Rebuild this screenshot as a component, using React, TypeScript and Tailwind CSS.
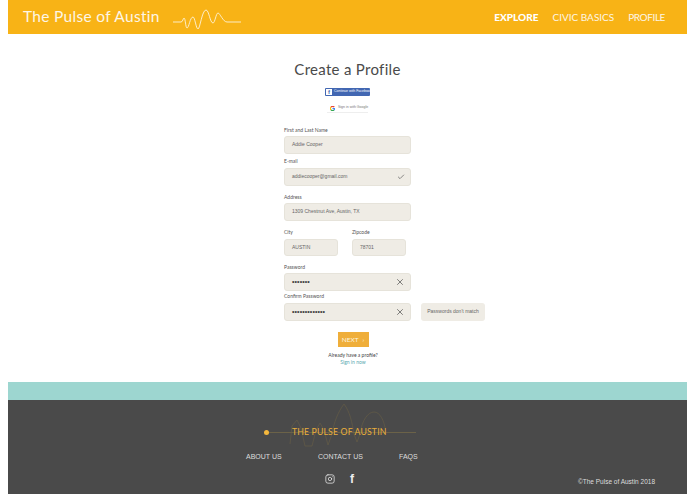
import { Check, Instagram, X } from "lucide-react";

const futura = "font-['Lato',sans-serif]";
const arial = "font-['Liberation_Sans',Arial,sans-serif]";

function Field({
  label,
  value,
  labelClass,
  width = "w-[127px]",
  height = "h-[18px]",
  icon,
  dots,
}: {
  label: string;
  value: string;
  labelClass: string;
  width?: string;
  height?: string;
  icon?: React.ReactNode;
  dots?: boolean;
}) {
  return (
    <div className={width}>
      <div className={`${futura} text-[5px] leading-[7px] text-[#555] ${labelClass}`}>{label}</div>
      <div
        className={`flex ${height} items-center justify-between rounded-[3px] border border-[#e6e3da] bg-[#efece5] pl-[7px] pr-[5px] ${arial} ${
          dots ? "text-[7px] font-bold tracking-[0.1px] text-[#444]" : "text-[5px] text-[#666]"
        }`}
      >
        <span>{value}</span>
        {icon}
      </div>
    </div>
  );
}

function Pulse() {
  return (
    <svg width="72" height="24" viewBox="0 0 72 24" fill="none" stroke="#fdf3d8" strokeWidth="0.9">
      <path d="M3 17 H11 C13 17 13 13 14 13 C15.5 13 15.5 23 17 23 C19 23 20 12 23 12 C25 12 26 24 28 24 C30 24 32 5 36 5 C39 5 40 18 43 18 C45 18 46 8 48 8 C50 8 53 17 57 17 H71" />
    </svg>
  );
}

function Skyline() {
  return (
    <svg
      className="absolute left-[24px] top-0"
      width="104"
      height="48"
      viewBox="0 0 104 48"
      fill="none"
      stroke="#645c46"
      strokeWidth="0.7"
    >
      <path d="M2 44 L4 26 L9 20 L13 28 L17 46 L24 46 L28 30 L32 23 L36 30 L40 45 L44 34 C46 22 50 12 56 4 C62 12 64 22 66 34 L69 42 L72 34 C74 20 80 12 86 12 C92 12 96 20 98 32" />
    </svg>
  );
}

export default function App() {
  return (
    <div className={`flex min-h-[494px] w-[695px] flex-col overflow-hidden bg-white px-2 ${futura}`}>
      <header className="flex h-[34px] items-center justify-between bg-[#f8b316] pl-[15px] pr-[22px] text-[#fdf6e6]">
        <div className="flex items-center gap-[10px]">
          <span className="text-[15.5px] leading-none tracking-[0.3px]">The Pulse of Austin</span>
          <Pulse />
        </div>
        <nav className="flex items-center gap-[14px] text-[10px]">
          <span className="font-black text-white">EXPLORE</span>
          <span>CIVIC BASICS</span>
          <span className="tracking-[-0.4px]">PROFILE</span>
        </nav>
      </header>

      <main className="flex h-[348px] flex-col items-center">
        <h1 className="mt-[25px] text-[15px] leading-5 tracking-[0.3px] text-[#4a4a4a]">Create a Profile</h1>
        <div className="mt-[9px] flex h-[8px] w-[45px] items-center gap-[2px] rounded-[1px] bg-[#4267b2] px-[1px]">
          <span className={`flex h-[6px] w-[6px] shrink-0 items-center justify-center bg-white text-[6px] font-bold leading-none text-[#4267b2] ${arial}`}>
            f
          </span>
          <span className={`whitespace-nowrap text-[3.5px] leading-none text-white ${arial}`}>Continue with Facebook</span>
        </div>
        <div className="mt-[8px] flex h-[9px] w-[41px] items-center gap-[3px] border-b border-[#eee] pl-[3px]">
          <svg width="5" height="5" viewBox="0 0 10 10" fill="none" strokeWidth="2.4" className="shrink-0">
            <path d="M8.5 2.2 A4.2 4.2 0 0 0 2 2.2" stroke="#ea4335" />
            <path d="M2 2.2 A4.2 4.2 0 0 0 2 7.8" stroke="#fbbc05" />
            <path d="M2 7.8 A4.2 4.2 0 0 0 8 8" stroke="#34a853" />
            <path d="M8 8 A4.2 4.2 0 0 0 9 5 H5" stroke="#4285f4" />
          </svg>
          <span className={`whitespace-nowrap text-[3.5px] leading-none text-[#777] ${arial}`}>Sign in with Google</span>
        </div>

        <form className="ml-[276px] mt-[14px] flex w-[201px] flex-col self-start">
          <Field label="First and Last Name" value="Addie Cooper" labelClass="mb-[2px]" />
          <div className="mt-[4px]">
            <Field
              label="E-mail"
              value="addiecooper@gmail.com"
              labelClass="mb-[3px]"
              icon={<Check className="h-[8px] w-[8px] text-[#555]" strokeWidth={2} />}
            />
          </div>
          <div className="mt-[8px]">
            <Field label="Address" value="1309 Chestnut Ave, Austin, TX" labelClass="mb-[2px]" />
          </div>
          <div className="mt-[8px] flex gap-[14px]">
            <Field label="City" value="AUSTIN" labelClass="mb-[3px]" width="w-[54px]" height="h-[17px]" />
            <Field label="Zipcode" value="78701" labelClass="mb-[3px]" width="w-[54px]" height="h-[17px]" />
          </div>
          <div className="mt-[8px]">
            <Field
              label="Password"
              value="•••••••"
              labelClass="mb-[2px]"
              dots
              icon={<X className="h-[10px] w-[10px] text-[#444]" strokeWidth={1.6} />}
            />
          </div>
          <div className="mt-[2px] flex items-end gap-[10px]">
            <Field
              label="Confirm Password"
              value="•••••••••••••"
              labelClass="mb-[3px]"
              dots
              icon={<X className="h-[10px] w-[10px] text-[#444]" strokeWidth={1.6} />}
            />
            <div className={`flex h-[18px] w-[64px] items-center justify-center rounded-[3px] bg-[#efece5] text-[5px] text-[#666] ${arial}`}>
              Passwords don't match
            </div>
          </div>
          <div className="mt-[11px] flex w-[138px] justify-center">
            <div className="flex h-[15px] w-[31px] items-center justify-center gap-[4px] bg-[#efae3a] text-[6.5px] text-[#fdf3dc]">
              <span>NEXT</span>
              <span className="text-[6px]">›</span>
            </div>
          </div>
          <div className="mt-[5px] w-[138px] text-center text-[5px] leading-[7px]">
            <div className="text-[#444]">Already have a profile?</div>
            <div className="text-[#5aa9b0]">Sign in now</div>
          </div>
        </form>
      </main>

      <div className="h-[18px] bg-[#9dd6d0]" />

      <footer className="relative h-[94px] bg-[#4a4a4a]">
        <div className="relative ml-[256px] h-[52px] w-[152px]">
          <Skyline />
          <div className="absolute left-0 top-[30px] h-[5px] w-[5px] rounded-full bg-[#f5b83d]" />
          <div className="absolute left-[5px] right-0 top-[32px] h-px bg-[#6b6248]" />
          <div className="absolute left-[28px] top-[26px] whitespace-nowrap text-[8.7px] leading-3 tracking-[0.15px] text-[#e8ae3c]">
            THE PULSE OF AUSTIN
          </div>
        </div>
        <div className={`flex items-center pl-[238px] text-[7px] leading-[10px] text-[#ddd] ${arial}`}>
          <span className="w-[72px]">ABOUT US</span>
          <span className="w-[81px]">CONTACT US</span>
          <span>FAQS</span>
        </div>
        <div className="mt-[12px] flex items-center gap-[15px] pl-[317px] text-[#eee]">
          <Instagram className="h-[10px] w-[10px]" strokeWidth={1.8} />
          <span className={`text-[12px] font-bold leading-[10px] ${arial}`}>f</span>
        </div>
        <div className={`absolute right-[32px] top-[78px] text-[6.5px] leading-[8px] text-[#ddd] ${arial}`}>
          ©The Pulse of Austin 2018
        </div>
      </footer>
    </div>
  );
}
